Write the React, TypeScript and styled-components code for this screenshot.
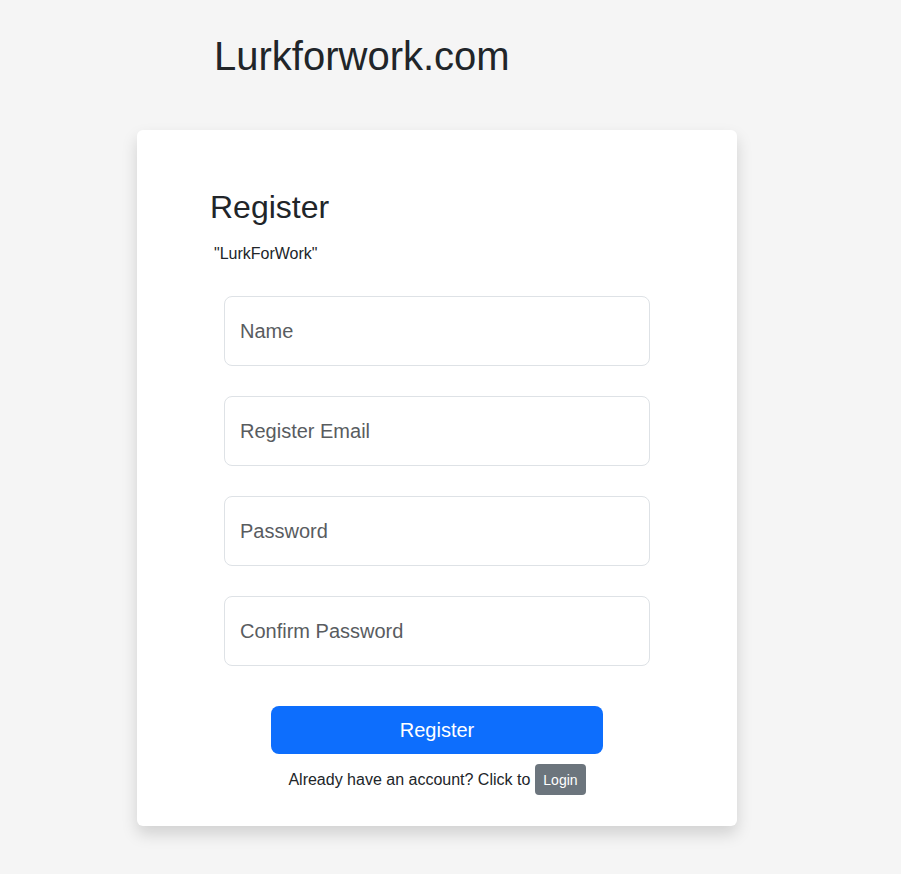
import styled, { createGlobalStyle } from 'styled-components'

const GlobalStyle = createGlobalStyle`
	body {
		margin: 0;
		background-color: #f5f5f5;
		font-family: 'Liberation Sans', Arial, sans-serif;
		color: #212529;
	}
`

const Page = styled.div`
	padding: 32px 0 48px 137px;
`

const SiteTitle = styled.h1`
	margin: 0 0 50px 77px;
	font-size: 40px;
	font-weight: 400;
	line-height: 1.2;
`

const Card = styled.div`
	width: 600px;
	box-sizing: border-box;
	background-color: #ffffff;
	border-radius: 6px;
	box-shadow: 0 8px 16px rgba(0, 0, 0, 0.15);
	padding: 58px 0 31px;
`

const Heading = styled.h2`
	margin: 0 0 16px 73px;
	font-size: 32px;
	font-weight: 400;
	line-height: 1.2;
`

const Subtitle = styled.p`
	margin: 0 0 30px 77px;
	font-size: 16px;
	line-height: 24px;
`

const Form = styled.form`
	width: 426px;
	margin: 0 auto;
	display: flex;
	flex-direction: column;
	gap: 30px;
`

const Input = styled.input`
	box-sizing: border-box;
	height: 70px;
	width: 100%;
	padding: 0 15px;
	border: 1px solid #dee2e6;
	border-radius: 8px;
	font-family: inherit;
	font-size: 20px;
	color: #212529;

	&::placeholder {
		color: #595c5f;
	}
`

const SubmitButton = styled.button`
	display: block;
	width: 332px;
	height: 48px;
	margin: 40px auto 0;
	border: none;
	border-radius: 8px;
	background-color: #0d6efd;
	color: #ffffff;
	font-family: inherit;
	font-size: 20px;
`

const LoginRow = styled.div`
	display: flex;
	justify-content: center;
	align-items: center;
	gap: 5px;
	margin-top: 10px;
	font-size: 16px;
	line-height: 24px;
`

const LoginButton = styled.button`
	height: 31px;
	padding: 0 8px;
	border: none;
	border-radius: 4px;
	background-color: #6c757d;
	color: #ffffff;
	font-family: inherit;
	font-size: 14px;
`

export default function App() {
	return (
		<>
			<GlobalStyle />
			<Page>
				<SiteTitle>Lurkforwork.com</SiteTitle>
				<Card>
					<Heading>Register</Heading>
					<Subtitle>"LurkForWork"</Subtitle>
					<Form onSubmit={(e) => e.preventDefault()}>
						<Input type="text" placeholder="Name" />
						<Input type="email" placeholder="Register Email" />
						<Input type="password" placeholder="Password" />
						<Input type="password" placeholder="Confirm Password" />
					</Form>
					<SubmitButton type="button">Register</SubmitButton>
					<LoginRow>
						Already have an account? Click to
						<LoginButton type="button">Login</LoginButton>
					</LoginRow>
				</Card>
			</Page>
		</>
	)
}
